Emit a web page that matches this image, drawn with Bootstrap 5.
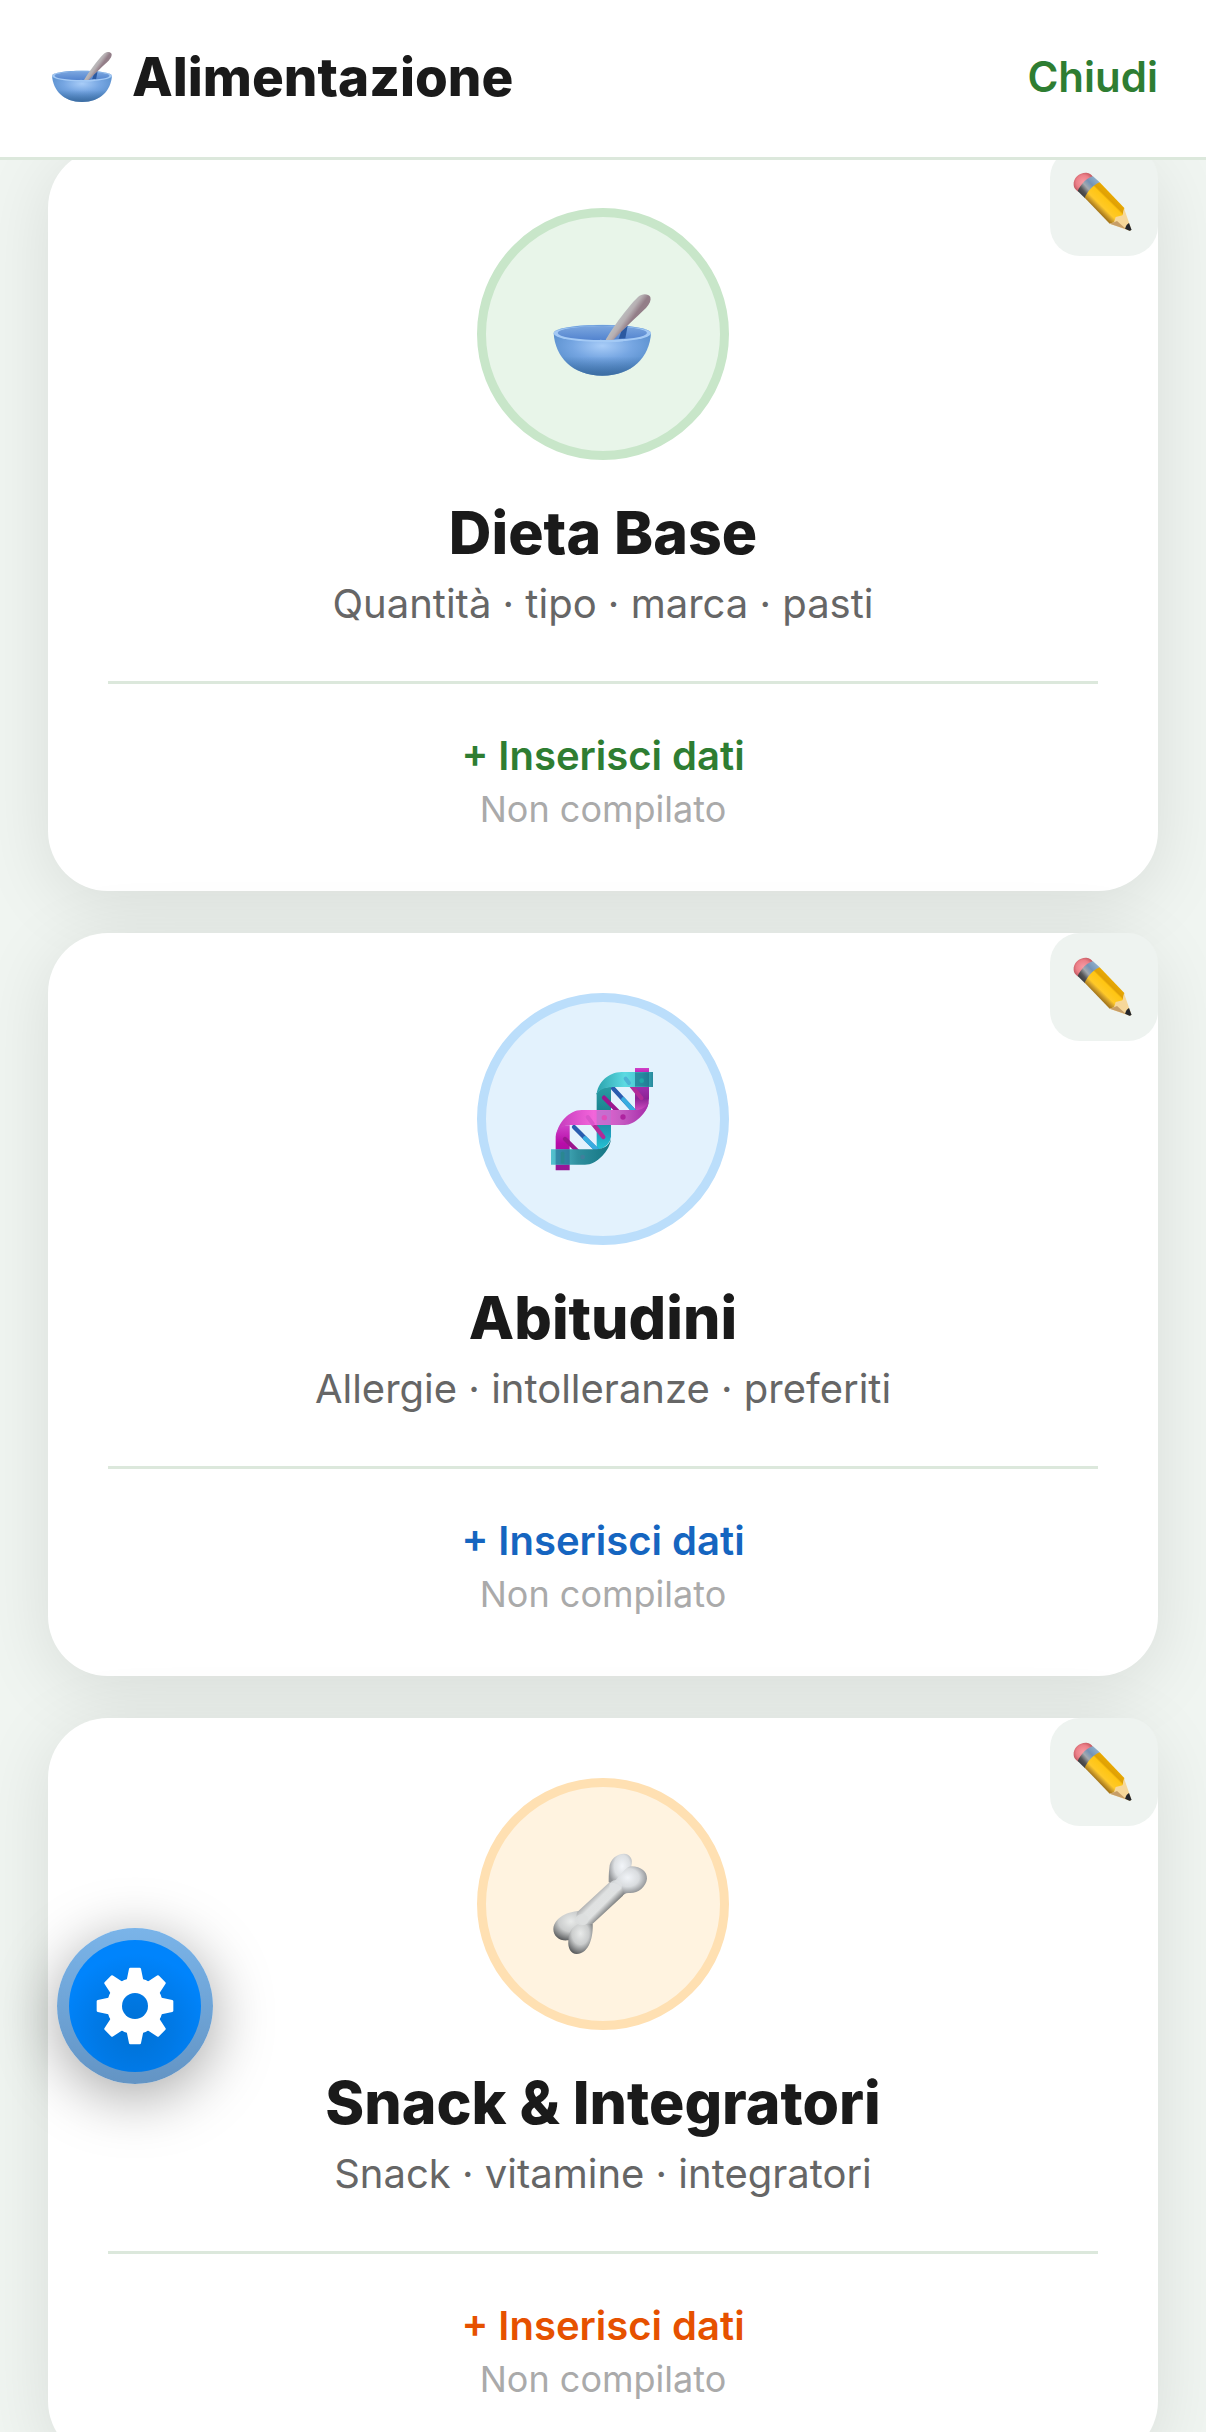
<!DOCTYPE html>
<html lang="it">
<head>
<meta charset="utf-8">
<meta name="viewport" content="width=device-width, initial-scale=1">
<title>Alimentazione</title>
<link href="https://cdn.jsdelivr.net/npm/bootstrap@5.3.0/dist/css/bootstrap.min.css" rel="stylesheet">
<style>
  body { font-family: Inter, "Noto Sans", sans-serif; background: #f0f5f1; color: #1a1a1a; }
  .app-header { padding: 0 48px 4px; height: 160px; border-bottom: 3px solid #dce8dc; }
  .app-title { font-size: 53px; line-height: 64px; font-weight: 800; gap: 16px; }
  .title-icon { width: 68px; height: 50px; }
  .close-btn { font-size: 42px; line-height: 52px; font-weight: 600; color: #2e7d32; }
  .app-main { scrollbar-width: none; }
  .section-list { padding: 0 48px 48px; margin-top: -12px; gap: 42px; }
  .section-card { border: 0; border-radius: 60px; padding: 60px; box-shadow: 0 12px 72px rgba(0, 0, 0, .1); }
  .edit-btn { width: 108px; height: 108px; border-radius: 30px; background: #eef3f0; }
  .icon-disc { width: 252px; height: 252px; border: 9px solid; }
  .icon-disc svg { width: 108px; height: 108px; }
  .disc-green { background: #e8f5e9; border-color: #c8e6c9; }
  .disc-blue { background: #e3f2fd; border-color: #bbdefb; }
  .disc-orange { background: #fff3e0; border-color: #ffe0b2; }
  .section-title { font-size: 59px; line-height: 70px; font-weight: 800; margin: 38px 0 12px; }
  .section-sub { font-size: 40px; line-height: 48px; color: #666; margin-bottom: 53px; }
  .section-foot { border-top: 3px solid #dce8dc; padding-top: 48px; gap: 7px; }
  .insert-btn { font-size: 40px; line-height: 48px; font-weight: 600; }
  .status-text { font-size: 36px; line-height: 44px; color: #aaa; }
  .ink-green { color: #2e7d32; }
  .ink-blue { color: #1565c0; }
  .ink-orange { color: #e65100; }
  .settings-fab { left: 57px; bottom: 348px; width: 156px; height: 156px; border: 12px solid transparent;
    background: radial-gradient(circle at 50% 68%, #0071d4 0, #0079e6 35%, #0084fc 68%) padding-box,
                linear-gradient(#7ab4e9, #6394c4) border-box;
    box-shadow: 0 12px 60px rgba(0, 0, 0, .36); }
  .settings-fab svg { width: 78px; height: 78px; }
</style>
</head>
<body class="vh-100 overflow-hidden d-flex flex-column">

<svg width="0" height="0" class="position-absolute" aria-hidden="true">
  <defs>
    <radialGradient id="bowlBody" cx=".5" cy=".3" r=".62"><stop offset="0" stop-color="#a9cdf8"/><stop offset=".5" stop-color="#76a6e2"/><stop offset="1" stop-color="#548bc9"/></radialGradient>
    <linearGradient id="bowlShade" x1="0" y1="0" x2="0" y2="1"><stop offset=".55" stop-color="#3d6fa8" stop-opacity="0"/><stop offset="1" stop-color="#376597" stop-opacity=".8"/></linearGradient>
    <linearGradient id="bowlIn" x1="0" y1="0" x2="0" y2="1"><stop offset="0" stop-color="#7ba6df"/><stop offset="1" stop-color="#5384cf"/></linearGradient>
    <linearGradient id="spoon" gradientUnits="userSpaceOnUse" x1="490" y1="365" x2="518" y2="385"><stop offset="0" stop-color="#bdbfc0"/><stop offset=".5" stop-color="#b6afb2"/><stop offset="1" stop-color="#937e88"/></linearGradient>
    <linearGradient id="teal" x1="0" y1="0" x2="1" y2="0"><stop offset="0" stop-color="#2ba3ad"/><stop offset=".5" stop-color="#5cdae2"/><stop offset=".8" stop-color="#45c4ce"/><stop offset="1" stop-color="#28899c"/></linearGradient>
    <linearGradient id="teal2" x1="0" y1="0" x2="1" y2="0"><stop offset="0" stop-color="#55c3d0"/><stop offset=".45" stop-color="#2f8f9e"/><stop offset="1" stop-color="#137583"/></linearGradient>
    <linearGradient id="tealV" x1="0" y1="0" x2="0" y2="1"><stop offset="0" stop-color="#2a9ba3"/><stop offset=".4" stop-color="#1a828e"/><stop offset=".75" stop-color="#219fbd"/><stop offset="1" stop-color="#23c7d6"/></linearGradient>
    <linearGradient id="pinkH" x1="0" y1="0" x2="1" y2="0"><stop offset="0" stop-color="#c43bbd"/><stop offset=".4" stop-color="#f365da"/><stop offset=".68" stop-color="#c85ec4"/><stop offset="1" stop-color="#a62ba9"/></linearGradient>
    <linearGradient id="pinkV" x1="0" y1="0" x2="0" y2="1"><stop offset="0" stop-color="#a02fae"/><stop offset=".45" stop-color="#8c2395"/><stop offset="1" stop-color="#e457cf"/></linearGradient>
    <linearGradient id="pinkV2" x1="0" y1="0" x2="0" y2="1"><stop offset="0" stop-color="#cf42c8"/><stop offset=".4" stop-color="#b80ca9"/><stop offset="1" stop-color="#951795"/></linearGradient>
    <linearGradient id="shaft" gradientUnits="userSpaceOnUse" x1="396" y1="394" x2="442" y2="440"><stop offset="0" stop-color="#a9aaab"/><stop offset=".3" stop-color="#dfe1e1"/><stop offset=".65" stop-color="#e0e2e2"/><stop offset="1" stop-color="#77797a"/></linearGradient>
    <radialGradient id="knobA" cx=".58" cy=".38" r=".62"><stop offset="0" stop-color="#f2f5f9"/><stop offset=".55" stop-color="#dcdfe2"/><stop offset="1" stop-color="#929497"/></radialGradient>
    <radialGradient id="knobB" cx=".48" cy=".38" r=".68"><stop offset="0" stop-color="#f1f4f8"/><stop offset=".45" stop-color="#d9dcdf"/><stop offset="1" stop-color="#646669"/></radialGradient>
    <radialGradient id="knobC" cx=".5" cy=".35" r=".7"><stop offset="0" stop-color="#e9ebea"/><stop offset=".5" stop-color="#cbcdcd"/><stop offset="1" stop-color="#505254"/></radialGradient>
    <linearGradient id="pBody" gradientUnits="userSpaceOnUse" x1="133" y1="188" x2="178" y2="142"><stop offset="0" stop-color="#a97a1c"/><stop offset=".16" stop-color="#d6a42b"/><stop offset=".28" stop-color="#ffc928"/><stop offset=".66" stop-color="#ffc512"/><stop offset=".74" stop-color="#dfa006"/><stop offset="1" stop-color="#e9a900"/></linearGradient>
    <linearGradient id="pMetal" gradientUnits="userSpaceOnUse" x1="120" y1="178" x2="168" y2="136"><stop offset="0" stop-color="#3b3b3e"/><stop offset=".22" stop-color="#555557"/><stop offset=".45" stop-color="#a4a9ae"/><stop offset=".7" stop-color="#7393b6"/><stop offset="1" stop-color="#8cabc8"/></linearGradient>
    <radialGradient id="pEraser" cx=".5" cy=".5" r=".6"><stop offset="0" stop-color="#f79ca4"/><stop offset=".6" stop-color="#ec7f88"/><stop offset="1" stop-color="#b95058"/></radialGradient>
  </defs>

  <symbol id="bowl" viewBox="267 270 324 324"><g id="bowlArt">
    <path d="M281 429C285 500 337 557 427 557S569 500 573 429Z" fill="url(#bowlBody)"/>
    <path d="M281 429C285 500 337 557 427 557S569 500 573 429Z" fill="url(#bowlShade)"/>
    <ellipse cx="427" cy="430" rx="146" ry="26" fill="#a4caf5"/>
    <ellipse cx="427" cy="429" rx="134" ry="21" fill="url(#bowlIn)"/>
    <path d="M281 429C282 414 350 405 427 405S572 414 573 429C566 414 500 408 427 408S288 414 281 429Z" fill="#6e9fdb"/>
    <path d="M476 446L484 424 503 407 496 445Z" fill="#2b59a0"/>
    <path d="M437 450C449 427 500 353 534 321C546 310 565 311 571 321C574 331 569 342 558 354C530 381 486 421 460 450Z" fill="url(#spoon)"/>
    <path d="M420 449Q440 452 490 447L490 454Q450 459 420 455Z" fill="#a4caf5"/>
  </g></symbol>

  <symbol id="dna" viewBox="267 255 324 324">
    <rect x="525" y="264" width="42" height="60" fill="url(#pinkV2)"/>
    <path d="M410 340Q425 318 453 321V470Q450 500 410 511Z" fill="url(#tealV)"/>
    <path d="M287 470V571H329V436Q289 434 287 470Z" fill="url(#pinkV2)"/>
    <path d="M525 318H567V354Q567 384 548 402L525 396Z" fill="url(#pinkV)"/>
    <g stroke-linecap="round" stroke-width="13" fill="none">
      <path d="M459 325L527 399M342 441L410 509" stroke="#285caf"/>
      <path d="M490 358L527 399M375 475L410 509" stroke="#37ace0"/>
      <path d="M432 353L490 411M315 477L370 531" stroke="#9b168f"/>
      <path d="M497 296L544 354M384 412L430 471" stroke="#b22b98"/>
    </g>
    <path d="M410 345C411 310 445 276 485 276H579V321H470C440 321 415 326 410 345Z" fill="url(#teal)"/>
    <rect x="525" y="277" width="42" height="43" fill="#176a86" opacity=".65"/>
    <path d="M497 296L507 309" stroke="#4cb4d5" stroke-width="12" stroke-linecap="round"/>
    <circle cx="545" cy="302" r="7" fill="#1fa9a8"/>
    <path d="M290 462C294 430 327 390 365 390H527C544 390 558 383 566 366C562 400 522 435 495 435H340C312 435 296 442 290 462Z" fill="url(#pinkH)"/>
    <rect x="410" y="391" width="43" height="43" fill="#bd70ce" opacity=".75"/>
    <circle cx="433" cy="413" r="8" fill="#e04ebb"/>
    <circle cx="489" cy="411" r="8" fill="#ae239f"/>
    <path d="M383 411L398 431" stroke="#d955ca" stroke-width="12" stroke-linecap="round"/>
    <path d="M273 508H400C425 508 446 502 453 476C450 512 410 554 375 554H273Z" fill="url(#teal2)"/>
    <rect x="287" y="509" width="42" height="44" fill="#256a95" opacity=".6"/>
    <circle cx="368" cy="531" r="7" fill="#407f9c"/>
    <path d="M308 520V545" stroke="#2a8791" stroke-width="11" stroke-linecap="round"/>
  </symbol>

  <symbol id="bone" viewBox="267 255 324 324">
    <path d="M448 310C448 282 472 266 492 266C510 267 520 282 514 302C505 330 492 348 475 365L446 352C446 340 446 326 448 310Z" fill="url(#knobA)"/>
    <path d="M514 304C544 304 562 321 561 341C558 366 533 386 507 384C497 383 492 388 486 393L450 360C475 346 492 305 514 304Z" fill="url(#knobB)"/>
    <path d="M355 438C325 440 283 456 280 492C280 515 300 529 324 526C350 524 370 510 385 485Z" fill="url(#knobC)"/>
    <path d="M325 527C325 500 340 478 372 472L398 476C400 510 390 565 350 567C333 566 323 550 325 527Z" fill="url(#knobC)"/>
    <path d="M446 354L355 438C345 445 350 470 366 480L398 476L488 393C500 372 470 348 446 354Z" fill="url(#shaft)"/>
    <ellipse cx="467" cy="362" rx="19" ry="17" fill="#dfe1e3" opacity=".8"/>
    <ellipse cx="366" cy="464" rx="20" ry="17" fill="#dcdede" opacity=".8"/>
  </symbol>

  <symbol id="pencil" viewBox="29 39 324 324">
    <path d="M100 150C98 128 118 112 138 113C148 114 155 120 158 126L114 170C106 165 100 158 100 150Z" fill="url(#pEraser)"/>
    <path d="M158 124L178 142L134 190L112 168C122 147 139 129 158 124Z" fill="url(#pMetal)"/>
    <path d="M178 142L252 219L247 243L232 262L208 266L133 188C142 169 157 151 178 142Z" fill="url(#pBody)"/>
    <path d="M251 220L273 283Q273 288 267 287L208 266L221 262L226 246L247 241Z" fill="#f6d79a"/>
    <path d="M208 266L221 262L230 258L258 283Z" fill="#c79e67"/>
    <path d="M266 264L273 283Q273 288 267 287L254 281C257 272 260 267 266 264Z" fill="#24262b"/>
  </symbol>
</svg>

<header class="app-header bg-white d-flex align-items-center justify-content-between flex-shrink-0">
  <h1 class="app-title d-flex align-items-center mb-0">
    <svg class="title-icon" viewBox="281 313 292 244" aria-hidden="true"><use href="#bowlArt"/></svg>
    <span>Alimentazione</span>
  </h1>
  <button type="button" class="close-btn btn border-0 p-0">Chiudi</button>
</header>

<main class="app-main flex-grow-1 overflow-auto">
  <div class="section-list d-flex flex-column">
    <section class="section-card card text-center">
      <button type="button" class="edit-btn btn border-0 p-0 position-absolute top-0 end-0" aria-label="Modifica Dieta Base"><svg class="d-block w-100 h-100"><use href="#pencil"/></svg></button>
      <div class="icon-disc disc-green rounded-circle d-flex align-items-center justify-content-center mx-auto"><svg aria-hidden="true"><use href="#bowl"/></svg></div>
      <h2 class="section-title">Dieta Base</h2>
      <p class="section-sub">Quantità · tipo · marca · pasti</p>
      <div class="section-foot d-flex flex-column align-items-center">
        <button type="button" class="insert-btn ink-green btn border-0 p-0">+ Inserisci dati</button>
        <span class="status-text">Non compilato</span>
      </div>
    </section>

    <section class="section-card card text-center">
      <button type="button" class="edit-btn btn border-0 p-0 position-absolute top-0 end-0" aria-label="Modifica Abitudini"><svg class="d-block w-100 h-100"><use href="#pencil"/></svg></button>
      <div class="icon-disc disc-blue rounded-circle d-flex align-items-center justify-content-center mx-auto"><svg aria-hidden="true"><use href="#dna"/></svg></div>
      <h2 class="section-title">Abitudini</h2>
      <p class="section-sub">Allergie · intolleranze · preferiti</p>
      <div class="section-foot d-flex flex-column align-items-center">
        <button type="button" class="insert-btn ink-blue btn border-0 p-0">+ Inserisci dati</button>
        <span class="status-text">Non compilato</span>
      </div>
    </section>

    <section class="section-card card text-center">
      <button type="button" class="edit-btn btn border-0 p-0 position-absolute top-0 end-0" aria-label="Modifica Snack e Integratori"><svg class="d-block w-100 h-100"><use href="#pencil"/></svg></button>
      <div class="icon-disc disc-orange rounded-circle d-flex align-items-center justify-content-center mx-auto"><svg aria-hidden="true"><use href="#bone"/></svg></div>
      <h2 class="section-title">Snack &amp; Integratori</h2>
      <p class="section-sub">Snack · vitamine · integratori</p>
      <div class="section-foot d-flex flex-column align-items-center">
        <button type="button" class="insert-btn ink-orange btn border-0 p-0">+ Inserisci dati</button>
        <span class="status-text">Non compilato</span>
      </div>
    </section>
  </div>
</main>

<button type="button" class="settings-fab btn rounded-circle p-0 position-fixed d-flex align-items-center justify-content-center" aria-label="Impostazioni">
  <svg viewBox="-117 -117 234 234" aria-hidden="true">
    <defs><path id="tooth" d="M-14 -111H14L22 -72H-22Z"/></defs>
    <mask id="hub"><rect x="-117" y="-117" width="234" height="234" fill="#fff"/><circle r="39" fill="#000"/></mask>
    <g fill="#fff" stroke="#fff" stroke-width="8" stroke-linejoin="round" mask="url(#hub)">
      <circle r="80"/>
      <use href="#tooth"/><use href="#tooth" transform="rotate(45)"/><use href="#tooth" transform="rotate(90)"/><use href="#tooth" transform="rotate(135)"/>
      <use href="#tooth" transform="rotate(180)"/><use href="#tooth" transform="rotate(225)"/><use href="#tooth" transform="rotate(270)"/><use href="#tooth" transform="rotate(315)"/>
    </g>
  </svg>
</button>

<script src="https://cdn.jsdelivr.net/npm/bootstrap@5.3.0/dist/js/bootstrap.bundle.min.js"></script>
</body>
</html>
